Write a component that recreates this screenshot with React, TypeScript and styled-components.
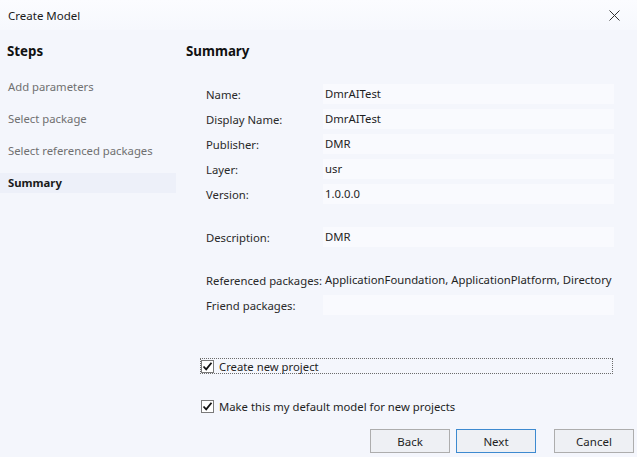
import React from "react";
import styled, { createGlobalStyle } from "styled-components";

const Global = createGlobalStyle`
  html, body { margin: 0; padding: 0; }
  body {
    width: 637px;
    height: 457px;
    overflow: hidden;
    background: #f4f6fc;
    font-family: "Noto Sans", "Open Sans", "Liberation Sans", sans-serif;
    font-size: 11.3px;
    color: #262626;
  }
`;

const Window = styled.div`
  width: 637px;
  height: 457px;
  display: flex;
  flex-direction: column;
  background: #f4f6fc;
`;

const TitleBar = styled.div`
  height: 30px;
  flex: none;
  display: flex;
  align-items: center;
  justify-content: space-between;
  padding: 0 17px 0 8px;
  background: linear-gradient(#fbfcff, #f6f8fd);
  color: #1a1a1a;
`;

const Title = styled.span`
  font-size: 11.5px;
`;

const CloseIcon = styled.svg`
  width: 11px;
  height: 11px;
  display: block;
`;

const Main = styled.div`
  flex: 1;
  display: flex;
  min-height: 0;
`;

const Sidebar = styled.nav`
  width: 176px;
  flex: none;
  padding-top: 11px;
  display: flex;
  flex-direction: column;
`;

const Heading = styled.div`
  height: 20px;
  line-height: 20px;
  font-weight: 700;
  font-size: 13.3px;
  color: #111;
`;

const SidebarHeading = styled(Heading)`
  padding-left: 7px;
  margin-bottom: 16px;
`;

const StepList = styled.div`
  display: flex;
  flex-direction: column;
  gap: 12px;
`;

const Step = styled.div<{ $active?: boolean }>`
  height: 20px;
  line-height: 20px;
  padding-left: 8px;
  color: ${(p) => (p.$active ? "#1a1a1a" : "#707070")};
  font-weight: ${(p) => (p.$active ? 700 : 400)};
  background: ${(p) => (p.$active ? "#edf0f9" : "transparent")};
`;

const Content = styled.section`
  flex: 1;
  padding: 11px 0 0 10px;
  display: flex;
  flex-direction: column;
  min-width: 0;
`;

const Details = styled.div`
  padding-left: 20px;
  margin-top: 23px;
  display: flex;
  flex-direction: column;
`;

const Row = styled.div<{ $gap: number }>`
  display: flex;
  align-items: center;
  height: 20px;
  margin-top: ${(p) => p.$gap}px;
  &:first-child { margin-top: 0; }
`;

const Label = styled.div`
  width: 117px;
  flex: none;
  white-space: nowrap;
  color: #2a2a2a;
`;

const Value = styled.div<{ $plain?: boolean }>`
  width: 291px;
  height: 20px;
  line-height: 20px;
  padding-left: 2px;
  box-sizing: border-box;
  white-space: nowrap;
  background: ${(p) => (p.$plain ? "transparent" : "#f9fafe")};
  color: #1f1f1f;
`;

const Checks = styled.div`
  margin-top: 43px;
  padding-left: 14px;
  display: flex;
  flex-direction: column;
  gap: 24px;
`;

const CheckRow = styled.label<{ $focused?: boolean }>`
  display: flex;
  align-items: center;
  gap: 5px;
  height: 16px;
  width: 413px;
  box-sizing: border-box;
  border: 1px dotted ${(p) => (p.$focused ? "#6b6b6b" : "transparent")};
  color: #1f1f1f;
`;

const Box = styled.span`
  width: 13px;
  height: 13px;
  flex: none;
  border: 1px solid #7a7a7a;
  background: #ffffff;
  display: flex;
  align-items: center;
  justify-content: center;
  box-sizing: border-box;
`;

const Buttons = styled.div`
  margin-top: 15px;
  display: flex;
  justify-content: flex-end;
  padding-right: 3px;
  gap: 6px;
`;

const Button = styled.button<{ $primary?: boolean; $gapLeft?: number }>`
  width: 80px;
  height: 24px;
  font-family: inherit;
  font-size: 11.5px;
  color: #1f1f1f;
  background: #eef0f4;
  border: 1px solid ${(p) => (p.$primary ? "#3d8ad0" : "#adadad")};
  margin-left: ${(p) => p.$gapLeft ?? 0}px;
  padding: 0;
`;

const Check = () => (
  <svg width="11" height="11" viewBox="0 0 11 11">
    <path d="M1.5 5.5 L4.2 8.3 L9.5 1.8" fill="none" stroke="#111" strokeWidth="1.8" />
  </svg>
);

const rows: { label: string; value: string; gap: number; plain?: boolean }[] = [
  { label: "Name:", value: "DmrAITest", gap: 5 },
  { label: "Display Name:", value: "DmrAITest", gap: 5 },
  { label: "Publisher:", value: "DMR", gap: 5 },
  { label: "Layer:", value: "usr", gap: 5 },
  { label: "Version:", value: "1.0.0.0", gap: 5 },
  { label: "Description:", value: "DMR", gap: 23 },
  { label: "Referenced packages:", value: "ApplicationFoundation, ApplicationPlatform, Directory", gap: 23, plain: true },
  { label: "Friend packages:", value: "", gap: 5 },
];

export default function App() {
  return (
    <Window>
      <Global />
      <TitleBar>
        <Title>Create Model</Title>
        <CloseIcon viewBox="0 0 11 11">
          <path d="M0.5 0.5 L10.5 10.5 M10.5 0.5 L0.5 10.5" stroke="#333" strokeWidth="1" />
        </CloseIcon>
      </TitleBar>
      <Main>
        <Sidebar>
          <SidebarHeading>Steps</SidebarHeading>
          <StepList>
            <Step>Add parameters</Step>
            <Step>Select package</Step>
            <Step>Select referenced packages</Step>
            <Step $active>Summary</Step>
          </StepList>
        </Sidebar>
        <Content>
          <Heading>Summary</Heading>
          <Details>
            {rows.map((r) => (
              <Row key={r.label} $gap={r.gap}>
                <Label>{r.label}</Label>
                <Value $plain={r.plain}>{r.value}</Value>
              </Row>
            ))}
          </Details>
          <Checks>
            <CheckRow $focused>
              <Box><Check /></Box>
              Create new project
            </CheckRow>
            <CheckRow>
              <Box><Check /></Box>
              Make this my default model for new projects
            </CheckRow>
          </Checks>
          <Buttons>
            <Button>Back</Button>
            <Button $primary>Next</Button>
            <Button $gapLeft={12}>Cancel</Button>
          </Buttons>
        </Content>
      </Main>
    </Window>
  );
}
